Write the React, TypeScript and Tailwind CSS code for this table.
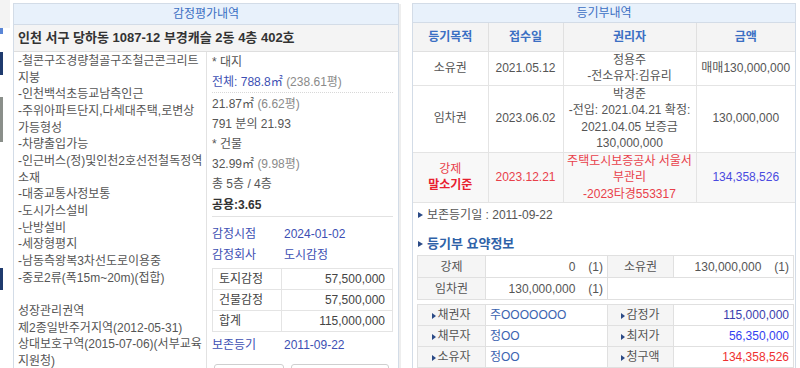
import React from "react";

const leftLines = [
  "-철콘구조경량철골구조철근콘크리트",
  "지붕",
  "-인천백석초등교남측인근",
  "-주위아파트단지,다세대주택,로변상",
  "가등형성",
  "-차량출입가능",
  "-인근버스(정)및인천2호선전철독정역",
  "소재",
  "-대중교통사정보통",
  "-도시가스설비",
  "-난방설비",
  "-세장형평지",
  "-남동측왕복3차선도로이용중",
  "-중로2류(폭15m~20m)(접합)",
  "",
  "성장관리권역",
  "제2종일반주거지역(2012-05-31)",
  "상대보호구역(2015-07-06)(서부교육",
  "지원청)",
];

function Tri({ small }: { small?: boolean }) {
  return (
    <span
      className={
        small
          ? "inline-block w-0 h-0 border-y-[3px] border-y-transparent border-l-[4px] border-l-[#2b4a86] mr-[1px] align-middle"
          : "inline-block w-0 h-0 border-y-[3.5px] border-y-transparent border-l-[5px] border-l-[#2b4a86] align-middle"
      }
    />
  );
}

export default function App() {
  return (
    <div className="flex w-[800px] h-[368px] overflow-hidden bg-white text-[12px] text-[#555] [font-family:'Liberation_Sans','Noto_Sans_CJK_KR',sans-serif]">
      {/* left strip */}
      <div className="w-[13px] shrink-0 flex flex-col">
        <div className="h-[28px] w-[10px] bg-[#f3f3f3]" />
        <div className="h-[6px] w-[3px] bg-[#5a86d6]" />
        <div className="h-[18px]" />
        <div className="h-[23px] w-[3px] bg-[#1f3b6e]" />
        <div className="h-[22px]" />
        <div className="h-[45px] w-[3px] bg-[#8a8f8a]" />
        <div className="h-[126px]" />
        <div className="h-[22px] w-[3px] bg-[#1f3b6e]" />
      </div>

      {/* left panel */}
      <div className="w-[386px] shrink-0 mt-[3px] border border-[#d3dce7] border-b-0 flex flex-col">
        <div className="h-[21px] bg-[#e8f1fb] border-b border-[#d3dce7] flex items-center justify-center text-[#3b6fc3]">
          감정평가내역
        </div>
        <div className="h-[27px] bg-[#f4f4f4] border-b border-[#dedede] flex items-center pl-[4px] text-[13px] font-bold text-[#333]">
          인천 서구 당하동 1087-12 부경캐슬 2동 4층 402호
        </div>
        <div className="flex flex-1 min-h-0">
          <div className="w-[193px] shrink-0 border-r border-[#e2e2e2] pl-[4px] pt-[1px] leading-[16.67px]">
            {leftLines.map((l, i) => (
              <div key={i} className="whitespace-nowrap h-[16.67px]">
                {l}
              </div>
            ))}
          </div>
          <div className="flex-1 px-[5px] flex flex-col">
            <div className="h-[20px] leading-[20px]">* 대지</div>
            <div className="h-[21px] leading-[20px] border-b border-dotted border-[#d8d8d8]">
              <span className="text-[#3d4fb3]">전체: 788.8㎡</span>{" "}
              <span className="text-[#8a8a8a]">(238.61평)</span>
            </div>
            <div className="h-[20px] leading-[20px] mt-[1px]">
              21.87㎡ <span className="text-[#8a8a8a]">(6.62평)</span>
            </div>
            <div className="h-[20px] leading-[20px]">791 분의 21.93</div>
            <div className="h-[20px] leading-[20px]">* 건물</div>
            <div className="h-[20px] leading-[20px]">
              32.99㎡ <span className="text-[#8a8a8a]">(9.98평)</span>
            </div>
            <div className="h-[21px] leading-[21px]">총 5층 / 4층</div>
            <div className="h-[22px] leading-[21px] border-b border-[#e2e2e2] text-[#333] font-semibold">
              공용:3.65
            </div>
            <div className="h-[20px] leading-[20px] mt-[7px] flex text-[#3d4fb3]">
              <span className="w-[72px]">감정시점</span>
              <span>2024-01-02</span>
            </div>
            <div className="h-[20px] leading-[20px] mt-[1px] flex text-[#3d4fb3]">
              <span className="w-[72px]">감정회사</span>
              <span>도시감정</span>
            </div>
            <table className="mt-[3px] w-full border-collapse table-fixed">
              <colgroup>
                <col className="w-[69px]" />
                <col />
              </colgroup>
              <tbody>
                {[
                  ["토지감정", "57,500,000"],
                  ["건물감정", "57,500,000"],
                  ["합계", "115,000,000"],
                ].map(([a, b]) => (
                  <tr key={a} className="h-[21px]">
                    <td className="border border-[#e4e4e4] pl-[6px] text-[#444]">{a}</td>
                    <td className="border border-[#e4e4e4] pr-[7px] text-right text-[#444]">{b}</td>
                  </tr>
                ))}
              </tbody>
            </table>
            <div className="h-[20px] leading-[20px] mt-[3px] flex text-[#3d4fb3]">
              <span className="w-[72px]">보존등기</span>
              <span>2011-09-22</span>
            </div>
            <div className="flex mt-[9px] pl-[2px] gap-[7px]">
              <div className="w-[70px] h-[12px] border border-[#cfcfcf] rounded-t-[3px]" />
              <div className="w-[98px] h-[12px] border border-[#cfcfcf] rounded-t-[3px]" />
            </div>
          </div>
        </div>
      </div>

      {/* gap */}
      <div className="w-[13px] shrink-0 flex">
        <div className="w-[2px] mt-[4px] bg-[#eeeeee]" />
      </div>

      {/* right panel */}
      <div className="w-[384px] shrink-0 mt-[3px] border border-[#d3dce7] border-b-0 flex flex-col">
        <div className="h-[21px] bg-[#e8f1fb] border-b border-[#d3dce7] flex items-center justify-center text-[#3b6fc3]">
          등기부내역
        </div>
        <table className="w-full border-collapse table-fixed text-center leading-[16.5px]">
          <colgroup>
            <col className="w-[75px]" />
            <col className="w-[75px]" />
            <col className="w-[133px]" />
            <col />
          </colgroup>
          <thead>
            <tr className="h-[28px] bg-[#f4f4f4] text-[#3b6fc3] font-semibold">
              <th className="border-r border-b border-[#e0e0e0] font-semibold">등기목적</th>
              <th className="border-r border-b border-[#e0e0e0] font-semibold">접수일</th>
              <th className="border-r border-b border-[#e0e0e0] font-semibold">권리자</th>
              <th className="border-b border-[#e0e0e0] font-semibold">금액</th>
            </tr>
          </thead>
          <tbody>
            <tr className="h-[34px]">
              <td className="border-r border-b border-[#e4e4e4]">소유권</td>
              <td className="border-r border-b border-[#e4e4e4]">2021.05.12</td>
              <td className="border-r border-b border-[#e4e4e4]">
                정용주
                <br />
                -전소유자:김유리
              </td>
              <td className="border-b border-[#e4e4e4]">매매130,000,000</td>
            </tr>
            <tr className="h-[66px]">
              <td className="border-r border-b border-[#e4e4e4]">임차권</td>
              <td className="border-r border-b border-[#e4e4e4]">2023.06.02</td>
              <td className="border-r border-b border-[#e4e4e4] whitespace-nowrap">
                박경준
                <br />
                -전입: 2021.04.21 확정:
                <br />
                2021.04.05 보증금
                <br />
                130,000,000
              </td>
              <td className="border-b border-[#e4e4e4]">130,000,000</td>
            </tr>
            <tr className="h-[50px] bg-[#f8f8f8] text-[#e8404a]">
              <td className="border-r border-b border-[#e4e4e4]">
                강제
                <br />
                <span className="text-[#e8202f] font-semibold">말소기준</span>
              </td>
              <td className="border-r border-b border-[#e4e4e4]">2023.12.21</td>
              <td className="border-r border-b border-[#e4e4e4] whitespace-nowrap">
                주택도시보증공사 서울서
                <br />
                부관리
                <br />
                -2023타경553317
              </td>
              <td className="border-b border-[#e4e4e4] text-[#4a4ae0]">134,358,526</td>
            </tr>
          </tbody>
        </table>

        <div className="h-[24px] mt-[1px] flex items-center pl-[5px] gap-[4px]">
          <Tri />
          <span>보존등기일 : 2011-09-22</span>
        </div>
        <div className="h-[16px] mt-[10px] flex items-center pl-[5px] gap-[4px]">
          <Tri />
          <span className="text-[13px] font-bold text-[#2e62a8]">등기부 요약정보</span>
        </div>

        <table className="ml-[4px] mt-[3px] w-[377px] border-collapse table-fixed">
          <colgroup>
            <col className="w-[68px]" />
            <col className="w-[122px]" />
            <col className="w-[66px]" />
            <col />
          </colgroup>
          <tbody>
            <tr className="h-[22px]">
              <td className="border border-[#e0e0e0] bg-[#f5f5f5] text-center">강제</td>
              <td className="border border-[#e0e0e0] text-right pr-[4px]">
                0<span className="ml-[13px]">(1)</span>
              </td>
              <td className="border border-[#e0e0e0] bg-[#f5f5f5] text-center">소유권</td>
              <td className="border border-[#e0e0e0] text-right pr-[4px]">
                130,000,000<span className="ml-[13px]">(1)</span>
              </td>
            </tr>
            <tr className="h-[22px]">
              <td className="border border-[#e0e0e0] bg-[#f5f5f5] text-center">임차권</td>
              <td className="border border-[#e0e0e0] text-right pr-[4px]">
                130,000,000<span className="ml-[13px]">(1)</span>
              </td>
              <td className="border border-[#e0e0e0]" colSpan={2} />
            </tr>
          </tbody>
        </table>

        <table className="ml-[4px] mt-[4px] w-[377px] border-collapse table-fixed">
          <colgroup>
            <col className="w-[68px]" />
            <col className="w-[122px]" />
            <col className="w-[66px]" />
            <col />
          </colgroup>
          <tbody>
            {[
              ["채권자", "주OOOOOOO", "감정가", "115,000,000", "text-[#3a40ad]"],
              ["채무자", "정OO", "최저가", "56,350,000", "text-[#3340f0]"],
              ["소유자", "정OO", "청구액", "134,358,526", "text-[#ee3030]"],
            ].map(([a, b, c, d, col]) => (
              <tr key={a} className="h-[21px]">
                <td className="border border-[#e0e0e0] bg-[#f5f5f5] text-center">
                  <Tri small />
                  {a}
                </td>
                <td className="border border-[#e0e0e0] pl-[4px] text-[#3b63b0]">{b}</td>
                <td className="border border-[#e0e0e0] bg-[#f5f5f5] text-center">
                  <Tri small />
                  {c}
                </td>
                <td className={"border border-[#e0e0e0] text-right pr-[4px] " + col}>{d}</td>
              </tr>
            ))}
          </tbody>
        </table>
      </div>
    </div>
  );
}
